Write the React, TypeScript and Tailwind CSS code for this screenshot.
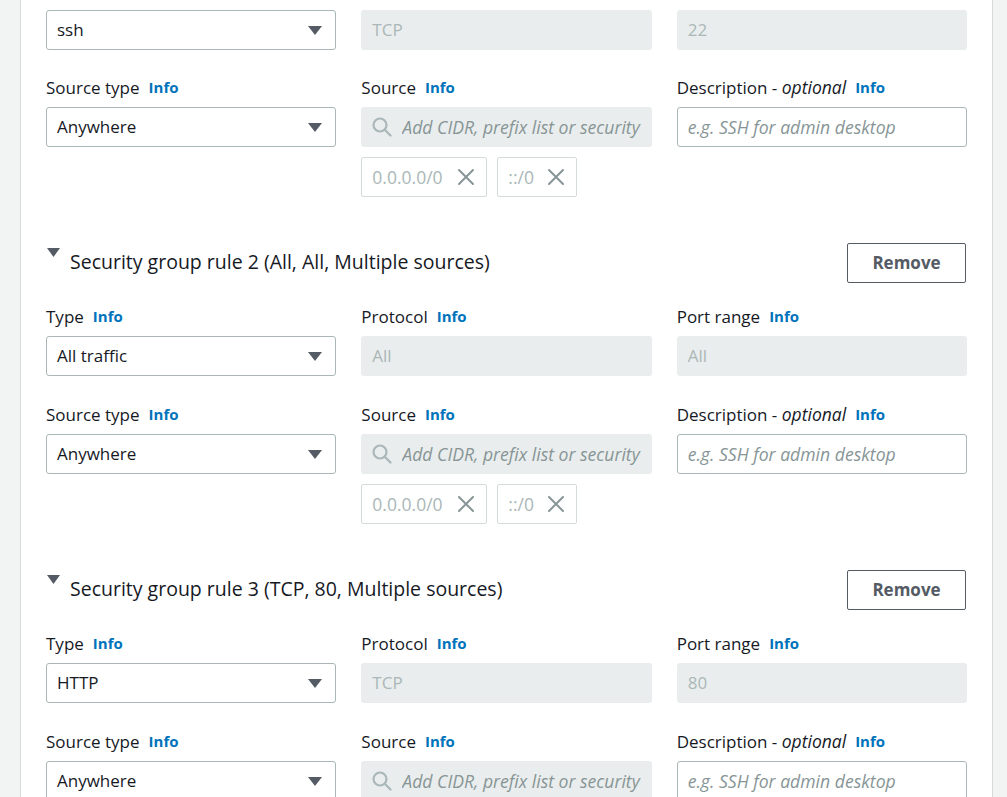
import React from "react";

const font = { fontFamily: '"Open Sans", "Noto Sans", Arial, sans-serif' };

function Caret() {
  return (
    <svg width="14" height="9" viewBox="0 0 14 9" className="shrink-0">
      <path d="M0 0h14L7 9z" fill="#545b64" />
    </svg>
  );
}

function XIcon() {
  return (
    <svg width="18" height="18" viewBox="0 0 18 18" fill="none" stroke="#879596" strokeWidth="2" strokeLinecap="round" className="shrink-0">
      <path d="M2 2l14 14M16 2L2 16" />
    </svg>
  );
}

function SearchIcon() {
  return (
    <svg width="20" height="20" viewBox="0 0 20 20" fill="none" stroke="#aab7b8" strokeWidth="2.2" strokeLinecap="round" className="shrink-0">
      <circle cx="8" cy="8" r="6.5" />
      <path d="M13 13l5.5 5.5" />
    </svg>
  );
}

function Label({ text, italic }: { text: string; italic?: string }) {
  return (
    <div className="flex h-[21px] items-center gap-[9px] text-[17px] leading-[21px] text-[#16191f]">
      <span>
        {text}
        {italic && <i className="text-[17.5px]">{italic}</i>}
      </span>
      <span className="text-[15px] font-bold text-[#0073bb]">Info</span>
    </div>
  );
}

function Select({ value }: { value: string }) {
  return (
    <div className="flex h-[40px] items-center justify-between rounded-[3px] border border-[#aab7b8] bg-white pl-[10px] pr-[13px] text-[17px] text-[#16191f]">
      <span>{value}</span>
      <Caret />
    </div>
  );
}

function Disabled({ value }: { value: string }) {
  return (
    <div className="flex h-[40px] items-center rounded-[3px] bg-[#eaeded] pl-[11px] text-[17px] text-[#aab7b8]">
      {value}
    </div>
  );
}

function SourceInput() {
  return (
    <div className="flex h-[40px] items-center gap-[10px] rounded-[3px] bg-[#eaeded] pl-[11px] pr-[11px] text-[17.6px] italic text-[#879596]">
      <SearchIcon />
      <span className="overflow-hidden whitespace-nowrap">Add CIDR, prefix list or security group</span>
    </div>
  );
}

function Chip({ value, w }: { value: string; w: string }) {
  return (
    <div className={`flex h-[40px] items-center justify-between rounded-[2px] border border-[#d5dbdb] pl-[10px] pr-[11px] text-[17.5px] text-[#aab7b8] ${w}`}>
      <span>{value}</span>
      <XIcon />
    </div>
  );
}

function DescInput() {
  return (
    <div className="flex h-[40px] items-center rounded-[3px] border border-[#aab7b8] bg-white pl-[10px] text-[17.6px] italic text-[#879596]">
      e.g. SSH for admin desktop
    </div>
  );
}

function SourceRow({ gap }: { gap: string }) {
  return (
    <div className={`grid grid-cols-3 gap-x-[25px] ${gap}`}>
      <div>
        <Label text="Source type" />
        <div className="mt-[9px]">
          <Select value="Anywhere" />
        </div>
      </div>
      <div>
        <Label text="Source" />
        <div className="mt-[9px]">
          <SourceInput />
        </div>
        <div className="mt-[10px] flex gap-[10px]">
          <Chip value="0.0.0.0/0" w="w-[126px]" />
          <Chip value="::/0" w="w-[80px]" />
        </div>
      </div>
      <div>
        <Label text="Description - " italic="optional" />
        <div className="mt-[9px]">
          <DescInput />
        </div>
      </div>
    </div>
  );
}

function Rule({ title, type, protocol, port }: { title: string; type: string; protocol: string; port: string }) {
  return (
    <div className="mt-[46px]">
      <div className="flex h-[40px] items-start justify-between">
        <div className="flex items-start">
          <svg width="13" height="9" viewBox="0 0 13 9" className="ml-[1px] mr-[10px] mt-[5px]">
            <path d="M0 0h13L6.5 9z" fill="#545b64" />
          </svg>
          <span className="text-[19.5px] leading-[38px] text-[#16191f]">{title}</span>
        </div>
        <button className="mr-[1px] h-[40px] w-[119px] rounded-[2px] border border-[#545b64] text-[17px] font-bold text-[#545b64]">
          Remove
        </button>
      </div>
      <div className="mt-[23px] grid grid-cols-3 gap-x-[25px]">
        <div>
          <Label text="Type" />
          <div className="mt-[9px]">
            <Select value={type} />
          </div>
        </div>
        <div>
          <Label text="Protocol" />
          <div className="mt-[9px]">
            <Disabled value={protocol} />
          </div>
        </div>
        <div>
          <Label text="Port range" />
          <div className="mt-[9px]">
            <Disabled value={port} />
          </div>
        </div>
      </div>
      <SourceRow gap="mt-[28px]" />
    </div>
  );
}

export default function App() {
  return (
    <div style={font} className="flex h-[797px] w-[1007px] overflow-hidden bg-[#f2f3f3]">
      <div className="ml-[20px] mr-[14px] flex-1 border-x border-[#d5dbdb] bg-white px-[25px] pt-[10px]">
        <div className="grid grid-cols-3 gap-x-[25px]">
          <Select value="ssh" />
          <Disabled value="TCP" />
          <Disabled value="22" />
        </div>
        <SourceRow gap="mt-[27px]" />
        <Rule title="Security group rule 2 (All, All, Multiple sources)" type="All traffic" protocol="All" port="All" />
        <Rule title="Security group rule 3 (TCP, 80, Multiple sources)" type="HTTP" protocol="TCP" port="80" />
      </div>
    </div>
  );
}
